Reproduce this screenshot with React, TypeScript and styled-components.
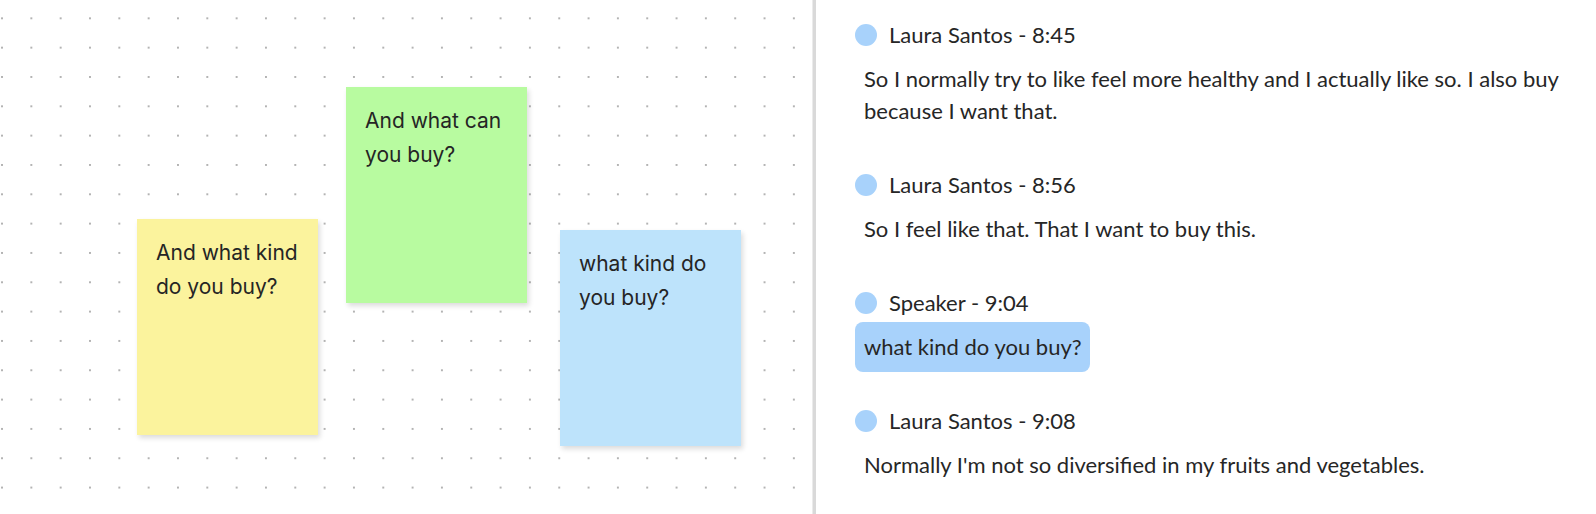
import styled, { createGlobalStyle } from "styled-components";

const GlobalStyle = createGlobalStyle`
  html, body {
    margin: 0;
    padding: 0;
    background: #ffffff;
  }
  #root {
    height: 100vh;
  }
`;

type Note = { text: string; color: string; x: number; y: number };

const notes: Note[] = [
  { text: "And what kind do you buy?", color: "#fbf39d", x: 137, y: 219 },
  { text: "And what can you buy?", color: "#b8fba0", x: 346, y: 87 },
  { text: "what kind do you buy?", color: "#bde3fb", x: 560, y: 230 },
];

type Entry = { speaker: string; time: string; text: string; active?: boolean };

const entries: Entry[] = [
  {
    speaker: "Laura Santos",
    time: "8:45",
    text: "So I normally try to like feel more healthy and I actually like so. I also buy because I want that.",
  },
  {
    speaker: "Laura Santos",
    time: "8:56",
    text: "So I feel like that. That I want to buy this.",
  },
  { speaker: "Speaker", time: "9:04", text: "what kind do you buy?", active: true },
  {
    speaker: "Laura Santos",
    time: "9:08",
    text: "Normally I'm not so diversified in my fruits and vegetables.",
  },
];

export default function App() {
  return (
    <>
      <GlobalStyle />
      <Layout>
        <Canvas>
          {notes.map((n) => (
            <Sticky key={n.text} $color={n.color} style={{ left: n.x, top: n.y }}>
              {n.text}
            </Sticky>
          ))}
        </Canvas>
        <Divider />
        <Transcript>
          {entries.map((e) => (
            <Block key={e.time}>
              <Header>
                <Avatar />
                <Name>
                  {e.speaker} - {e.time}
                </Name>
              </Header>
              <Body $active={e.active}>{e.text}</Body>
            </Block>
          ))}
        </Transcript>
      </Layout>
    </>
  );
}

const Layout = styled.div`
  display: flex;
  height: 100%;
  overflow: hidden;
`;

const Canvas = styled.div`
  position: relative;
  flex: 0 0 812px;
  background-color: #ffffff;
  background-image: radial-gradient(circle, #b3b3b3 0.9px, transparent 1.3px);
  background-size: 29.33px 29.33px;
  background-position: -12.67px 3.67px;
`;

const Sticky = styled.div<{ $color: string }>`
  position: absolute;
  width: 181px;
  height: 216px;
  box-sizing: border-box;
  padding: 17px 19px;
  background: ${(p) => p.$color};
  box-shadow: 2px 3px 5px rgba(0, 0, 0, 0.14);
  font-family: Inter, "Noto Sans", sans-serif;
  font-size: 21px;
  line-height: 34px;
  color: #252525;
`;

const Divider = styled.div`
  flex: 0 0 4px;
  background: #d9d9d9;
  border-left: 1px solid #ebebeb;
  box-sizing: border-box;
`;

const Transcript = styled.div`
  flex: 1;
  padding: 23px 14px 0 39px;
  font-family: Lato, "Liberation Sans", sans-serif;
  color: #262626;
`;

const Block = styled.div`
  display: flex;
  flex-direction: column;
  align-items: flex-start;
  gap: 7px;
  margin-bottom: 37px;
`;

const Header = styled.div`
  display: flex;
  align-items: center;
  gap: 12px;
  height: 24px;
`;

const Avatar = styled.span`
  width: 22px;
  height: 22px;
  border-radius: 50%;
  background: #a8d2fb;
`;

const Name = styled.span`
  font-size: 22px;
  line-height: 24px;
`;

const Body = styled.div<{ $active?: boolean }>`
  padding: 9px 8px 9px 9px;
  border-radius: 8px;
  font-size: 22px;
  line-height: 32px;
  background: ${(p) => (p.$active ? "#a8d2fb" : "transparent")};
`;
